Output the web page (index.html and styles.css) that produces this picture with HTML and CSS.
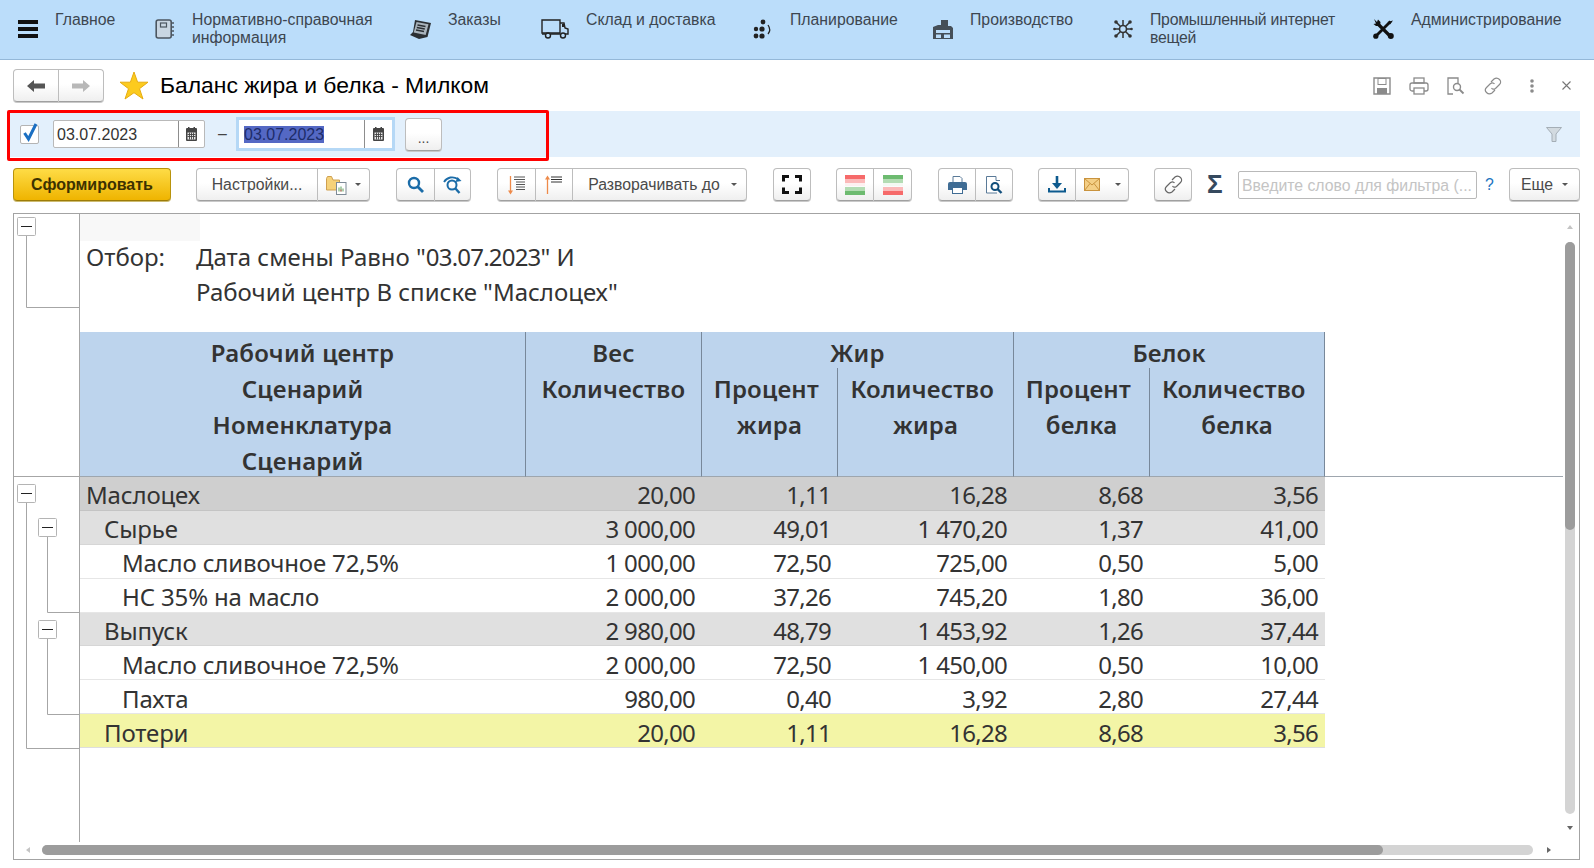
FILE: index.html
```html
<!DOCTYPE html>
<html lang="ru">
<head>
  <meta charset="UTF-8">
  <title>Баланс жира и белка - Милком</title>
  <link rel="stylesheet" href="styles.css">
</head>
<body>
  <nav class="topbar">
    <svg class="burger" width="20" height="18" viewBox="0 0 20 18"><rect width="20" height="4" y="0" fill="#111"/><rect width="20" height="4" y="7" fill="#111"/><rect width="20" height="4" y="14" fill="#111"/></svg>
    <a class="nav-item first"><span>Главное</span></a>
    <a class="nav-item">
      <svg width="20" height="20" viewBox="0 0 20 20"><rect x="1.200" y="1" width="15" height="18" rx="2" fill="#c9d6e2" stroke="#4c5660" stroke-width="1.600"/><rect x="5.500" y="4" width="6" height="4" fill="none" stroke="#4c5660" stroke-width="1.200"/><path d="M17 4h2M17 8h2M17 12h2M17 16h2" stroke="#4c5660" stroke-width="1.400"/></svg>
      <span>Нормативно-справочная<br>информация</span>
    </a>
    <a class="nav-item">
      <svg width="21" height="20" viewBox="0 0 21 20"><path d="M5 1l16 3-3.500 14L9 20 0 16l3-3z" fill="#2b2f33"/><path d="M6.500 3l12 2.300-2.800 10.700L3.700 13.500z" fill="#a9b3bb"/><path d="M7.500 6l8 1.500M6.800 8.500l8 1.500M6 11l8 1.500" stroke="#2b2f33" stroke-width="1.300"/></svg>
      <span>Заказы</span>
    </a>
    <a class="nav-item">
      <svg width="28" height="20" viewBox="0 0 28 20"><path d="M1 1h18v13H1z" fill="none" stroke="#222" stroke-width="1.400"/><path d="M19 4h4l1 5 3 1v5h-3M19 15H10M4 15H1" fill="none" stroke="#222" stroke-width="1.400"/><rect x="21" y="5" width="2" height="3" fill="#222"/><circle cx="7" cy="16.500" r="2.500" fill="none" stroke="#222" stroke-width="1.400"/><circle cx="22" cy="16.500" r="2.500" fill="none" stroke="#222" stroke-width="1.400"/></svg>
      <span>Склад и доставка</span>
    </a>
    <a class="nav-item">
      <svg width="20" height="20" viewBox="0 0 20 20"><g fill="#222"><circle cx="10" cy="3" r="2.400"/><circle cx="3" cy="10" r="2.200"/><circle cx="9" cy="10" r="2.600"/><circle cx="3" cy="17" r="2.400"/><circle cx="9" cy="17" r="2.600"/></g><path d="M15 6q3.500 5 0 9" fill="none" stroke="#222" stroke-width="1.300"/></svg>
      <span>Планирование</span>
    </a>
    <a class="nav-item">
      <svg width="20" height="20" viewBox="0 0 20 20"><path d="M0 20V8l5-2h3V1h7v6h3l2 2v11z" fill="#454f58"/><path d="M3 11h14v3H3zM3 15.500h5V19H3zM11 15.500h6V19h-6z" fill="#bbddfa"/></svg>
      <span>Производство</span>
    </a>
    <a class="nav-item snug">
      <svg width="20" height="20" viewBox="0 0 20 20"><circle cx="10" cy="10" r="3.500" fill="none" stroke="#333" stroke-width="1.600"/><path d="M10 1v6M10 13v6M1 10h6M13 10h6M3 3l4.500 4.500M17 3l-4.500 4.500M3 17l4.500-4.500M17 17l-4.500-4.500" stroke="#333" stroke-width="1.500"/><g fill="#333"><circle cx="3" cy="3" r="1.800"/><circle cx="17" cy="3" r="1.800"/><circle cx="3" cy="17" r="1.800"/><circle cx="17" cy="17" r="1.800"/><circle cx="1.500" cy="10" r="1.300"/><circle cx="18.500" cy="10" r="1.300"/></g></svg>
      <span>Промышленный интернет<br>вещей</span>
    </a>
    <a class="nav-item">
      <svg width="21" height="20" viewBox="0 0 21 20"><path d="M5 5l12 12" stroke="#111" stroke-width="3.200"/><path d="M17.500 2.500L4 16" stroke="#111" stroke-width="2.800"/><path d="M20 1.500l-3 4-2.500-2.500z" fill="#111"/><circle cx="2.800" cy="17.200" r="2.600" fill="#111"/><path d="M1 0l3 3 1-2.500L7.500 3 7 7H3L0.500 5l2.500-.5z" fill="#111"/><circle cx="17.800" cy="17" r="3" fill="#111"/></svg>
      <span>Администрирование</span>
    </a>
  </nav>

  <header class="title-row">
    <div class="btn-group nav-buttons">
      <button class="btn seg"><svg width="18" height="12" viewBox="0 0 18 12"><path d="M0 6l7-6v3.500h11v5H7V12z" fill="#555"/></svg></button>
      <button class="btn seg"><svg width="18" height="12" viewBox="0 0 18 12"><path d="M18 6l-7-6v3.500H0v5h11V12z" fill="#b8b8b8"/></svg></button>
    </div>
    <svg class="star" width="30" height="29" viewBox="0 0 30 29"><path d="M15 1l3.600 10.200H29l-8.500 6.500L24 28l-9-6.300L6 28l3.500-10.300L1 11.200h10.400z" fill="#fccb1e" stroke="#e6ac12"/></svg>
    <h1 class="title">Баланс жира и белка - Милком</h1>
    <div class="title-tools">
      <svg width="18" height="18" viewBox="0 0 18 18"><path d="M1 1h16v16H1z" fill="none" stroke="#8b8b8b" stroke-width="1.400"/><rect x="5" y="1.500" width="8" height="6" fill="none" stroke="#8b8b8b"/><rect x="4" y="11" width="10" height="6" fill="#8b8b8b"/></svg>
      <svg width="20" height="18" viewBox="0 0 20 18"><rect x="5" y="1" width="10" height="5" fill="none" stroke="#8b8b8b" stroke-width="1.300"/><rect x="1" y="6" width="18" height="8" rx="2" fill="none" stroke="#8b8b8b" stroke-width="1.300"/><rect x="5" y="11" width="10" height="6" fill="#fff" stroke="#8b8b8b" stroke-width="1.300"/></svg>
      <svg width="18" height="18" viewBox="0 0 18 18"><path d="M6 17H1V1h10v5" fill="none" stroke="#8b8b8b" stroke-width="1.300"/><circle cx="10" cy="10" r="3.500" fill="none" stroke="#8b8b8b" stroke-width="1.400"/><path d="M12.500 12.500l4 4" stroke="#8b8b8b" stroke-width="1.800"/></svg>
      <svg width="20" height="18" viewBox="0 0 20 18"><path d="M8 5l3-3c2-1.500 4-1 5.500.500s1.500 3.500 0 5l-4 4c-1.500 1-3 1-4-.500M12 13l-3 3c-2 1.500-4 1-5.500-.500s-1.500-3.500 0-5l4-4c1.500-1 3-1 4 .500" fill="none" stroke="#8b8b8b" stroke-width="1.200"/></svg>
      <svg class="dots" width="4" height="14" viewBox="0 0 4 14"><circle cx="2" cy="2" r="1.800" fill="#8b8b8b"/><circle cx="2" cy="7" r="1.800" fill="#8b8b8b"/><circle cx="2" cy="12" r="1.800" fill="#8b8b8b"/></svg>
      <svg class="close" width="9" height="9" viewBox="0 0 9 9"><path d="M.5.500l8 8M8.500.500l-8 8" stroke="#777" stroke-width="1.100"/></svg>
    </div>
  </header>

  <section class="period-bar">
    <span class="checkbox"><svg width="17" height="21" viewBox="0 0 17 21"><path d="M2.500 11l4 6L14 2" fill="none" stroke="#1b6fc2" stroke-width="3"/></svg></span>
    <div class="date-field">
      <span class="date-text">03.07.2023</span>
      <span class="date-cal"><svg width="11" height="14" viewBox="0 0 11 14"><use href="#cal"/></svg></span>
    </div>
    <span class="dash">–</span>
    <div class="date-field focused">
      <span class="date-text"><span class="selected">03.07.2023</span></span>
      <span class="date-cal"><svg width="11" height="14" viewBox="0 0 11 14"><use href="#cal"/></svg></span>
    </div>
    <button class="btn more">...</button>
    <svg class="filter-icon" width="16" height="15" viewBox="0 0 16 15"><path d="M.5.500h15L10 7v7.500H6V7z" fill="#d2dae0" stroke="#a4aeb6"/></svg>
    <div class="highlight"></div>
  </section>

  <svg class="defs" width="0" height="0"><defs><g id="cal"><rect y="1" width="11" height="13" rx="1" fill="#444"/><rect x="2" width="1.500" height="3" fill="#444"/><rect x="7.500" width="1.500" height="3" fill="#444"/><path d="M1.500 5.500h8v7h-8z" fill="#e8e8e8"/><path d="M3.500 5.500v7M5.500 5.500v7M7.500 5.500v7M1.500 7.500h8M1.500 9.500h8" stroke="#444" stroke-width=".9"/></g></defs></svg>

  <div class="toolbar">
    <button class="btn generate">Сформировать</button>

    <div class="btn-group w174 settings">
      <button class="btn seg grow">Настройки...</button>
      <button class="btn seg w52">
        <svg width="21" height="20" viewBox="0 0 21 20"><path d="M.5 3.500V15h13V5H7L5.500 1.500h-4z" fill="#f6d27a" stroke="#cfa050"/><rect x="10.500" y="7.500" width="9.500" height="12" fill="#fff" stroke="#7d8a96"/><path d="M13 16.500v-4M15 16.500v-5M17 16.500v-3" stroke="#5aa05a"/><path d="M15 16.500v-2" stroke="#d05050"/></svg>
        <i class="caret"></i>
      </button>
    </div>

    <div class="btn-group w75">
      <button class="btn seg w39"><svg width="17" height="17" viewBox="0 0 17 17"><circle cx="7" cy="7" r="5" fill="none" stroke="#1b6ca8" stroke-width="2.400"/><path d="M10.500 10.500l5.500 5.500" stroke="#1b6ca8" stroke-width="2.800"/></svg></button>
      <button class="btn seg grow"><svg width="19" height="18" viewBox="0 0 19 18"><circle cx="9" cy="9" r="4.500" fill="none" stroke="#1b6ca8" stroke-width="2"/><path d="M12 12l4.500 5" stroke="#1b6ca8" stroke-width="2.400"/><path d="M1 6c3-5 9-6 14-3" fill="none" stroke="#1b6ca8" stroke-width="1.800"/><path d="M18.500 5l-6 1 2-5z" fill="#1b6ca8"/></svg></button>
    </div>

    <div class="btn-group w250">
      <button class="btn seg w39"><svg width="18" height="20" viewBox="0 0 18 20"><path d="M2.500 1v16" stroke="#ee8a4a" stroke-width="1.300"/><path d="M0 15.500h5L2.500 19.500z" fill="#ee8a4a"/><path d="M6 2h11M6 4.500h11M8 7h9M8 9.500h9M8 12h9M8 14.500h9" stroke="#555"/></svg></button>
      <button class="btn seg w37"><svg width="18" height="20" viewBox="0 0 18 20"><path d="M2.500 3v16" stroke="#ee8a4a" stroke-width="1.300"/><path d="M0 4.500h5L2.500 .5z" fill="#ee8a4a"/><path d="M6 2h11M6 4.500h11M6 7h11" stroke="#333"/></svg></button>
      <button class="btn seg grow expand">Разворачивать до<i class="caret"></i></button>
    </div>

    <button class="btn w38"><svg width="20" height="19" viewBox="0 0 20 19"><path d="M1.500 6.500v-5h5.500M13 1.500h5.500v5M1.500 12.500v5H7M13 17.500h5.500v-5" fill="none" stroke="#111" stroke-width="3"/></svg></button>

    <div class="btn-group colors">
      <button class="btn seg grow"><svg width="20" height="20" viewBox="0 0 20 20"><rect width="20" height="4" fill="#f66a6a"/><rect y="4" width="20" height="4" fill="#fbb9b9"/><rect y="8" width="20" height="3" fill="#fdf0f0"/><rect y="12" width="20" height="4" fill="#b3dcb3"/><rect y="16" width="20" height="4" fill="#6dbb70"/></svg></button>
      <button class="btn seg w38"><svg width="20" height="20" viewBox="0 0 20 20"><rect width="20" height="4" fill="#6dbb70"/><rect y="4" width="20" height="4" fill="#b3dcb3"/><rect y="8" width="20" height="3" fill="#f3f9f3"/><rect y="12" width="20" height="4" fill="#fbb9b9"/><rect y="16" width="20" height="4" fill="#f66a6a"/></svg></button>
    </div>

    <div class="btn-group w75">
      <button class="btn seg w38"><svg width="19" height="18" viewBox="0 0 19 18"><path d="M5 7V.5h7l2 2V7" fill="#fff" stroke="#5a7a98"/><path d="M2 6h15a2 2 0 0 1 2 2v6h-4v-3H4v3H0V8a2 2 0 0 1 2-2z" fill="#3f6c94"/><rect x="4.500" y="11.500" width="10" height="6" fill="#fff" stroke="#3f6c94"/></svg></button>
      <button class="btn seg grow"><svg width="17" height="18" viewBox="0 0 17 18"><path d="M10 .5H.5v16.500H11" fill="#fff" stroke="#5a7a98"/><path d="M10 .5v4h4" fill="none" stroke="#5a7a98"/><circle cx="9" cy="10.500" r="3.500" fill="#fff" stroke="#124f7c" stroke-width="2"/><path d="M11.500 13l4 4" stroke="#124f7c" stroke-width="2.400"/></svg></button>
    </div>

    <div class="btn-group w91 tight">
      <button class="btn seg w38"><svg width="18" height="17" viewBox="0 0 18 17"><path d="M9 0v9" stroke="#0d5a8e" stroke-width="2.600"/><path d="M4 7h10l-5 6z" fill="#0d5a8e"/><path d="M1 12v3.500h16V12" fill="none" stroke="#0d5a8e" stroke-width="2"/></svg></button>
      <button class="btn seg grow mail"><svg width="16" height="13" viewBox="0 0 16 13"><rect x=".5" y=".5" width="15" height="12" fill="#f4cf86" stroke="#c9933e"/><path d="M.5.500L8 7l7.500-6.500M.5 12.500L6 5.500M15.500 12.500L10 5.500" fill="none" stroke="#c9933e"/></svg><i class="caret"></i></button>
    </div>

    <button class="btn w38 tight"><svg width="19" height="19" viewBox="0 0 19 19"><path d="M8 5l3-3c2-1.500 4-1 5.500.500s1.500 3.500 0 5l-4 4c-1.500 1-3 1-4-.500M11 14l-3 3c-2 1.500-4 1-5.500-.500S1 13 2.500 11.500l4-4c1.500-1 3-1 4 .500" fill="none" stroke="#666" stroke-width="1.200"/></svg></button>

    <div class="search-box">
      <span class="sigma">Σ</span>
      <div class="search-input">Введите слово для фильтра (...</div>
      <span class="help">?</span>
    </div>

    <button class="btn more-menu">Еще<i class="caret"></i></button>
  </div>

  <main class="report-frame">
    <svg class="tree" width="65" height="628" viewBox="0 0 65 628">
      <g fill="none" stroke="#a6a6a6">
        <path d="M12.500 22v71.500H65"/>
        <path d="M12.500 289v245.500H65"/>
        <path d="M33.500 323v75.500H65"/>
        <path d="M33.500 424v76.500H65"/>
        <path d="M0 262.500h65"/>
      </g>
      <g fill="#fff" stroke="#b4b4b4">
        <rect x="3.500" y="3.500" width="18" height="18" rx="1"/>
        <rect x="3.500" y="270.500" width="18" height="18" rx="1"/>
        <rect x="24.500" y="304.500" width="18" height="18" rx="1"/>
        <rect x="24.500" y="406.500" width="18" height="18" rx="1"/>
      </g>
      <path d="M7 12.500h11M7 279.500h11M28 313.500h11M28 415.500h11" stroke="#222"/>
    </svg>

    <div class="report">
      <div class="corner"></div>
      <div class="filter-text">
        <span>Отбор:</span>
        <div>Дата смены Равно "<span class="digits">03.07.2023</span>" И<br>Рабочий центр В списке "Маслоцех"</div>
      </div>
      <table class="balance">
        <colgroup>
          <col class="c-name"><col class="c-wide"><col class="c-pct"><col class="c-wide"><col class="c-pct"><col class="c-last"><col class="c-rest">
        </colgroup>
        <thead>
          <tr>
            <th rowspan="4">Рабочий центр<br>Сценарий<br>Номенклатура<br>Сценарий</th>
            <th>Вес</th>
            <th colspan="2">Жир</th>
            <th colspan="2">Белок</th>
            <td rowspan="4" class="head-rest"></td>
          </tr>
          <tr>
            <th rowspan="3">Количество</th>
            <th rowspan="3">Процент&nbsp;<br>жира</th>
            <th rowspan="3">Количество&nbsp;<br>жира</th>
            <th rowspan="3">Процент&nbsp;<br>белка</th>
            <th rowspan="3">Количество&nbsp;<br>белка</th>
          </tr>
          <tr></tr>
          <tr></tr>
        </thead>
        <tbody>
          <tr class="total"><td>Маслоцех</td><td>20,00</td><td>1,11</td><td>16,28</td><td>8,68</td><td>3,56</td></tr>
          <tr class="group"><td class="lvl1">Сырье</td><td>3 000,00</td><td>49,01</td><td>1 470,20</td><td>1,37</td><td>41,00</td></tr>
          <tr class="item"><td class="lvl2">Масло сливочное 72,5%</td><td>1 000,00</td><td>72,50</td><td>725,00</td><td>0,50</td><td>5,00</td></tr>
          <tr class="item"><td class="lvl2">НС 35% на масло</td><td>2 000,00</td><td>37,26</td><td>745,20</td><td>1,80</td><td>36,00</td></tr>
          <tr class="group"><td class="lvl1">Выпуск</td><td>2 980,00</td><td>48,79</td><td>1 453,92</td><td>1,26</td><td>37,44</td></tr>
          <tr class="item"><td class="lvl2">Масло сливочное 72,5%</td><td>2 000,00</td><td>72,50</td><td>1 450,00</td><td>0,50</td><td>10,00</td></tr>
          <tr class="item"><td class="lvl2">Пахта</td><td>980,00</td><td>0,40</td><td>3,92</td><td>2,80</td><td>27,44</td></tr>
          <tr class="loss"><td class="lvl1">Потери</td><td>20,00</td><td>1,11</td><td>16,28</td><td>8,68</td><td>3,56</td></tr>
        </tbody>
      </table>
    </div>

    <div class="scroll-v"><i></i></div>
    <div class="scroll-h"><i></i></div>
    <span class="arrow up"></span>
    <span class="arrow down"></span>
    <span class="arrow left"></span>
    <span class="arrow right"></span>
  </main>
</body>
</html>
```

FILE: styles.css
```css
html, body {
  margin: 0;
  padding: 0;
  height: 868px;
  overflow: hidden;
  background: #fff;
  font-family: "Liberation Sans", Arial, sans-serif;
  font-size: 15.8px;
  color: #333;
}

/* top sections bar */
.topbar {
  display: grid;
  grid-template-columns: 37px 100px 255px 131px 212px 180px 180px 260px auto;
  align-items: start;
  height: 59px;
  padding-left: 18px;
  background: #bbddfa;
  border-bottom: 1px solid #94b8d8;
}
.burger {
  margin-top: 20px;
}
.nav-item {
  display: flex;
  align-items: center;
  gap: 17px;
  height: 36px;
  margin-top: 11px;
  line-height: 18px;
  color: #3d4650;
}
.nav-item span {
  align-self: flex-start;
  white-space: nowrap;
}
.nav-item svg {
  flex: none;
}
.snug {
  letter-spacing: -0.25px;
}

/* title */
.title-row {
  display: flex;
  align-items: center;
  height: 51px;
  padding: 0 14px 0 13px;
}
.nav-buttons {
  width: 91px;
  height: 30px;
}
.star {
  margin-left: 15px;
}
.title {
  margin: 0 0 0 11px;
  font-size: 22.9px;
  font-weight: normal;
  color: #000;
}
.title-tools {
  display: flex;
  align-items: center;
  gap: 18px;
  margin-left: auto;
}
.dots {
  margin-left: 9px;
}
.close {
  margin-left: 10px;
  margin-right: 9px;
}

/* buttons */
.btn {
  display: flex;
  align-items: center;
  justify-content: center;
  height: 33px;
  padding: 0;
  font: inherit;
  color: #4a4a4a;
  background: linear-gradient(#fff, #fff 45%, #efefef);
  border: 1px solid #bdbdbd;
  border-bottom-color: #a0a0a0;
  border-radius: 4px;
  box-shadow: 0 1px 0 #c9c9c9;
}
.btn-group {
  display: flex;
  height: 33px;
}
.btn-group .seg {
  height: 100%;
  border-radius: 0;
  border-left: 0;
}
.btn-group .seg:first-child {
  border-left: 1px solid #bdbdbd;
  border-radius: 4px 0 0 4px;
}
.btn-group .seg:last-child {
  border-radius: 0 4px 4px 0;
}
.nav-buttons .seg {
  flex: 1;
}
.grow { flex: 1; }
.w37 { width: 37px; flex: none; }
.w38 { width: 38px; flex: none; }
.w39 { width: 39px; flex: none; }
.w52 { width: 52px; flex: none; gap: 8px; }
.w75 { width: 75px; }
.w91 { width: 91px; }
.w174 { width: 174px; }
.w250 { width: 250px; }
.caret {
  display: inline-block;
  width: 0;
  height: 0;
  border: 3px solid transparent;
  border-top: 3px solid #555;
  border-bottom: 0;
}

/* period bar */
.period-bar {
  position: relative;
  display: flex;
  align-items: center;
  height: 46px;
  margin: 0 14px 0 8px;
  padding-left: 12px;
  background: #e3f0fc;
}
.checkbox {
  position: relative;
  flex: none;
  width: 17px;
  height: 17px;
  background: #fff;
  border: 1px solid #b4b4b4;
  border-radius: 2px;
}
.checkbox svg {
  position: absolute;
  left: 1px;
  top: -4px;
}
.date-field {
  display: flex;
  align-items: center;
  box-sizing: border-box;
  width: 152px;
  height: 28px;
  margin-left: 14px;
  background: #fff;
  border: 1px solid #b9b9b9;
  border-radius: 2px;
  font-size: 16px;
}
.date-text {
  flex: 1;
  padding: 1px 0 0 3px;
  color: #333;
}
.date-cal {
  display: flex;
  align-items: center;
  justify-content: center;
  width: 25px;
  height: 100%;
  border-left: 1px solid #8d8d8d;
}
.dash {
  width: 12px;
  margin-left: 13px;
  color: #444;
}
.date-field.focused {
  width: 159px;
  height: 34px;
  margin-left: 6px;
  border: 3px solid #b5d8f6;
  border-radius: 0;
}
.focused .date-text {
  padding-left: 5px;
}
.focused .date-cal {
  width: 27px;
}
.selected {
  background: #5468c4;
  color: #1d2c6a;
}
.more {
  width: 37px;
  margin-left: 10px;
  padding-top: 8px;
  font-size: 14px;
}
.filter-icon {
  margin-left: auto;
  margin-right: 18px;
}
.highlight {
  position: absolute;
  left: -1px;
  top: -1px;
  width: 542px;
  height: 51px;
  box-sizing: border-box;
  border: 3px solid #ff0000;
  border-radius: 2px;
  pointer-events: none;
}

.defs {
  position: absolute;
}

/* command bar */
.toolbar {
  display: flex;
  gap: 26px;
  margin: 11px 14px 12px 13px;
}
.toolbar > * {
  flex: none;
}
.generate {
  width: 158px;
  font-size: 16px;
  font-weight: bold;
  color: #3d3200;
  background: linear-gradient(#fedc46, #efb400);
  border-color: #b8930c;
  border-bottom-color: #9c7c08;
  box-shadow: 0 1px 0 #cdbb70;
}
.settings {
  margin-left: -1px;
}
.expand {
  gap: 11px;
  padding-left: 6px;
}
.colors {
  width: 76px;
  margin-left: -1px;
}
.tight {
  margin-left: -1px;
}
.mail {
  gap: 15px;
}
.search-box {
  display: flex;
  align-items: center;
  margin-left: -11px;
}
.sigma {
  width: 16px;
  font-size: 26px;
  font-weight: bold;
  color: #35495e;
}
.search-input {
  box-sizing: border-box;
  width: 239px;
  height: 28px;
  margin-left: 15px;
  padding-left: 3px;
  line-height: 27px;
  color: #c4c4c4;
  background: #fff;
  border: 1px solid #b9b9b9;
  border-radius: 2px;
  white-space: nowrap;
  overflow: hidden;
}
.help {
  width: 9px;
  margin-left: 8px;
  color: #1c74c0;
}
.more-menu {
  width: 71px;
  margin-left: -11px;
  gap: 9px;
}

/* report */
.report-frame {
  position: relative;
  display: flex;
  box-sizing: border-box;
  width: 1567px;
  height: 647px;
  margin-left: 13px;
  border: 1px solid #a3a3a3;
  overflow: hidden;
}
.tree {
  flex: none;
  box-sizing: content-box;
  border-right: 1px solid #a6a6a6;
}
.report {
  flex: 1;
  font-family: "Noto Sans", sans-serif;
  font-size: 24px;
  color: #333;
}
.corner {
  width: 120px;
  height: 27px;
  background: #f8f8f8;
}
.filter-text {
  display: flex;
  height: 69px;
  margin: -1px 0 23px;
  padding-left: 6px;
  line-height: 34.5px;
}
.filter-text > span {
  width: 110px;
}
.digits {
  letter-spacing: -0.8px;
}
.balance {
  table-layout: fixed;
  width: 1483px;
  border-spacing: 0;
}
.c-name { width: 446px; }
.c-wide { width: 176px; }
.c-pct { width: 136px; }
.c-last { width: 175px; }
.c-rest { width: 238px; }
.balance th {
  padding: 3px 0 0;
  height: 36px;
  box-sizing: border-box;
  line-height: 36px;
  font-weight: 600;
  letter-spacing: 0.2px;
  vertical-align: top;
  background: #bdd4ed;
  border-right: 1px solid #78889a;
}
/* text sits 3px low in its line, without making the header rows taller */
.balance th::after {
  content: "";
  display: block;
  margin-top: -3px;
}
.balance th[rowspan="4"],
.balance th[rowspan="3"],
.head-rest {
  border-bottom: 1px solid #9ea6ae;
}
.balance td {
  box-sizing: border-box;
  height: 33.9px;
  padding: 4px 7px 0 0;
  text-align: right;
  line-height: 28px;
  letter-spacing: -0.7px;
  white-space: nowrap;
}
.balance td:first-child {
  padding-left: 6px;
  text-align: left;
  letter-spacing: -0.15px;
}
.balance td.lvl1 { padding-left: 24px; }
.balance td.lvl2 { padding-left: 42px; }
.total td {
  background: #cfcfcf;
  border-bottom: 1px solid #c4c4c4;
}
.group td {
  background: #e0e0e0;
  border-bottom: 1px solid #d6d6d6;
}
.item td {
  background: #fff;
  border-bottom: 1px solid #e6e6e6;
}
.loss td {
  background: #f3f5a6;
  border-bottom: 1px solid #dedede;
}

/* scrollbars */
.scroll-v {
  position: absolute;
  left: 1551px;
  top: 28px;
  width: 10px;
  height: 572px;
  background: #d4d4d4;
  border-radius: 5px;
}
.scroll-v i {
  display: block;
  height: 288px;
  background: #9c9c9c;
  border-radius: 5px;
}
.scroll-h {
  position: absolute;
  left: 28px;
  top: 631px;
  width: 1491px;
  height: 10px;
  background: #d4d4d4;
  border-radius: 5px;
}
.scroll-h i {
  display: block;
  width: 1341px;
  height: 10px;
  background: #9c9c9c;
  border-radius: 5px;
}
.arrow {
  position: absolute;
  width: 0;
  height: 0;
  border: 3px solid transparent;
}
.arrow.up { left: 1553px; top: 11px; border-bottom: 4px solid #c4c4c4; border-top: 0; }
.arrow.down { left: 1553px; top: 612px; border-top: 4px solid #666; border-bottom: 0; }
.arrow.left { left: 12px; top: 633px; border-right: 4px solid #c4c4c4; border-left: 0; }
.arrow.right { left: 1533px; top: 633px; border-left: 4px solid #666; border-right: 0; }
```
